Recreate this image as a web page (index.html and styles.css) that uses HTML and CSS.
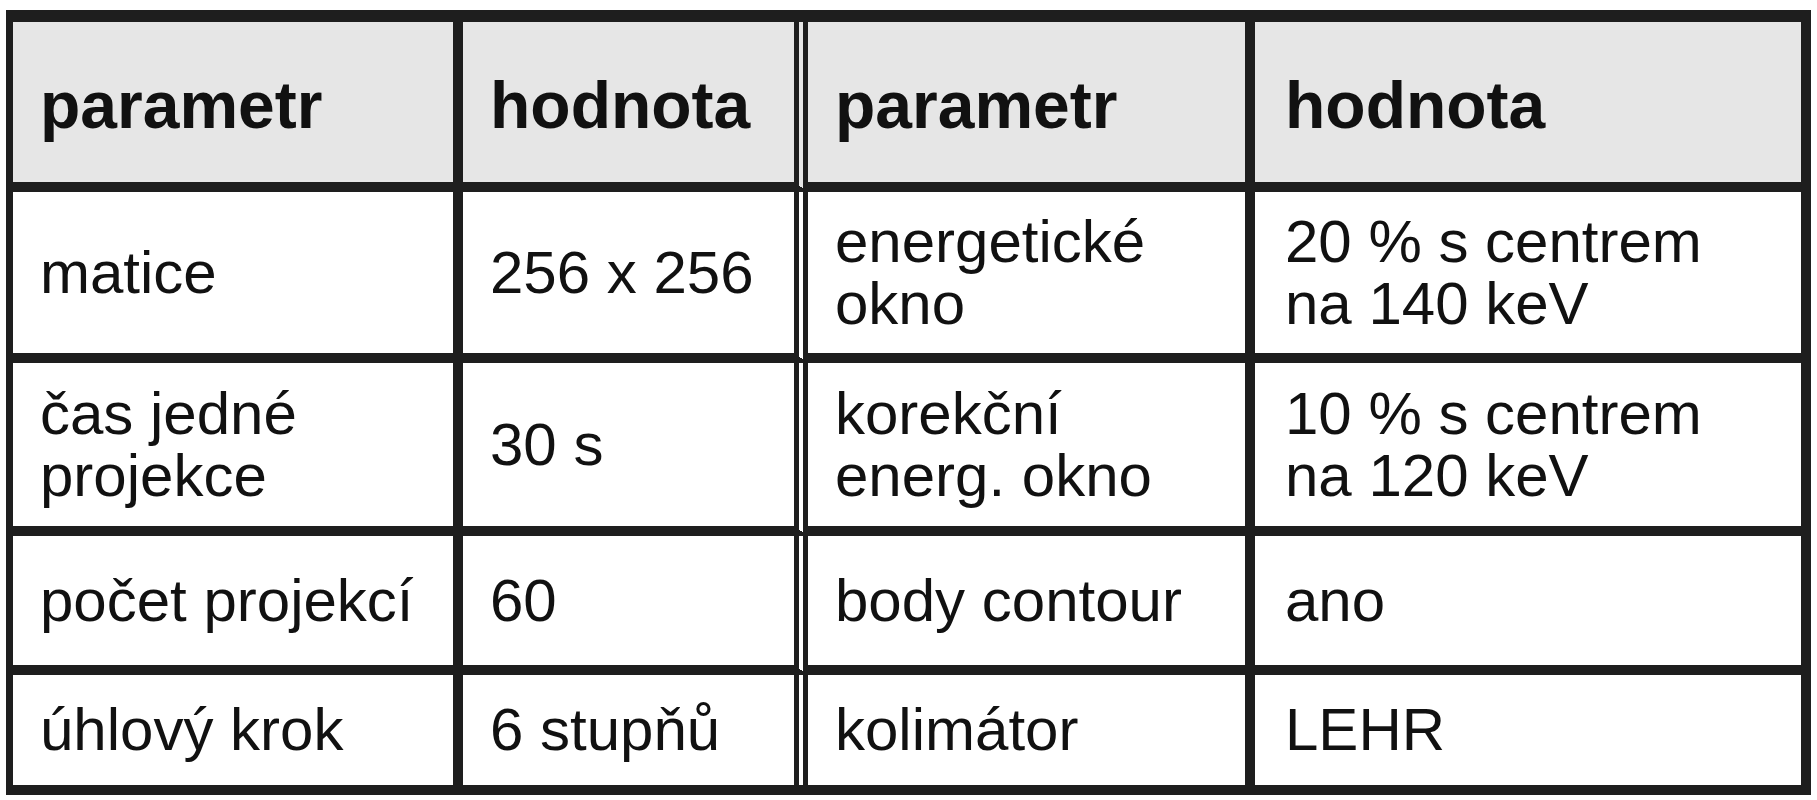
FILE: index.html
```html
<!DOCTYPE html>
<html lang="cs">
<head>
<meta charset="utf-8">
<title>Parametry</title>
<link rel="stylesheet" href="styles.css">
</head>
<body>
<table class="params">
  <tr class="head">
    <td class="c1">parametr</td>
    <td class="c2">hodnota</td>
    <td class="c3">parametr</td>
    <td class="c4">hodnota</td>
  </tr>
  <tr class="r1">
    <td class="c1">matice</td>
    <td class="c2">256 x 256</td>
    <td class="c3"><span class="ln">energetické</span><span class="ln">okno</span></td>
    <td class="c4"><span class="ln">20 % s centrem</span><span class="ln">na 140 keV</span></td>
  </tr>
  <tr class="r2">
    <td class="c1"><span class="ln">čas jedné</span><span class="ln">projekce</span></td>
    <td class="c2">30 s</td>
    <td class="c3"><span class="ln">korekční</span><span class="ln">energ. okno</span></td>
    <td class="c4"><span class="ln">10 % s centrem</span><span class="ln">na 120 keV</span></td>
  </tr>
  <tr class="r3">
    <td class="c1">počet projekcí</td>
    <td class="c2">60</td>
    <td class="c3">body contour</td>
    <td class="c4">ano</td>
  </tr>
  <tr class="r4 last">
    <td class="c1">úhlový krok</td>
    <td class="c2">6 stupňů</td>
    <td class="c3">kolimátor</td>
    <td class="c4">LEHR</td>
  </tr>
</table>
</body>
</html>
```
FILE: styles.css
```css
html, body {
  margin: 0;
  padding: 0;
  background: #ffffff;
}

body {
  padding: 10px 0 0 6px;
}

.params {
  box-sizing: border-box;
  width: 1805px;
  table-layout: fixed;
  border-collapse: separate;
  border-spacing: 0;
  border-style: solid;
  border-color: #1e1e1e;
  border-width: 12px 10px 10px 7px;
  font-family: "Liberation Sans", Arial, sans-serif;
  font-size: 60px;
  line-height: 62px;
  color: #111111;
}

.params td {
  box-sizing: border-box;
  padding: 0 0 0 27px;
  vertical-align: middle;
  border-style: solid;
  border-color: #1e1e1e;
  border-width: 0 10px 10px 0;
  white-space: nowrap;
  overflow: hidden;
}

.params .ln {
  display: block;
  height: 62px;
}

.params td.c1 { width: 450px; }
.params td.c2 { width: 345px; border-right: 14px double #1e1e1e; }
.params td.c3 { width: 447px; }
.params td.c4 { width: 546px; border-right-width: 0; padding-left: 30px; }

.params tr.last td { border-bottom-width: 0; }

.head td {
  background: #e6e6e6;
  font-weight: bold;
  font-size: 66px;
  height: 170px;
  padding-top: 6px;
}

.r1 td { height: 171px; }
.r2 td { height: 173px; }
.r3 td { height: 139px; }
.r4 td { height: 110px; }
```
